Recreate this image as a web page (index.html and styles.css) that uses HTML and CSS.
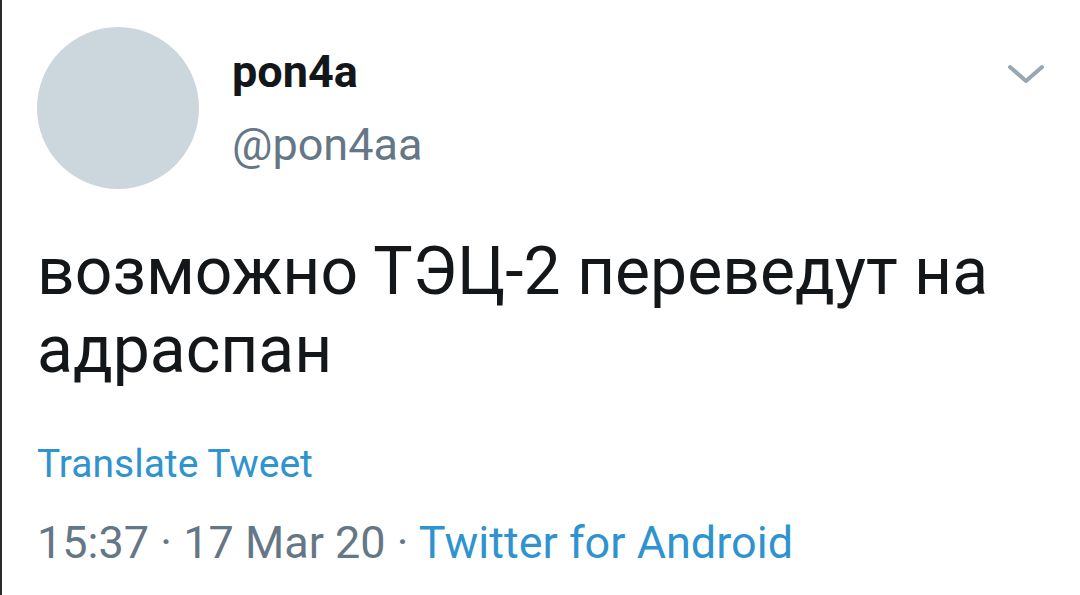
FILE: index.html
```html
<!DOCTYPE html>
<html lang="ru">
<head>
<meta charset="utf-8">
<link rel="stylesheet" href="styles.css">
</head>
<body>
<div class="tweet">
  <div class="head">
    <div class="avatar"></div>
    <div class="who">
      <div class="name">pon4a</div>
      <div class="handle">@pon4aa</div>
    </div>
    <svg class="chev" width="40" height="22" viewBox="0 0 40 22"><path d="M4 4 L20 18 L36 4" fill="none" stroke="#9aa7b3" stroke-width="4" stroke-linecap="round" stroke-linejoin="round"/></svg>
  </div>
  <div class="text">возможно ТЭЦ-2 переведут на адраспан</div>
  <div class="translate">Translate Tweet</div>
  <div class="meta">15:37 · 17 Mar 20 · <span class="src">Twitter for Android</span></div>
</div>
</body>
</html>
```
FILE: styles.css
```css
html, body { margin: 0; padding: 0; background: #fff; }
body { width: 1080px; height: 595px; overflow: hidden; font-family: Roboto, "Noto Sans", sans-serif; }
.tweet {
  height: 595px;
  box-sizing: border-box;
  border-left: 2px solid #2a2a2a;
  padding: 27px 0 0 35px;
}
.head { display: flex; align-items: flex-start; }
.avatar { width: 162px; height: 162px; border-radius: 50%; background: #ccd6dd; flex: none; }
.who { margin-left: 33px; flex: 1; padding-top: 19px; }
.name { font-weight: 700; font-size: 45px; line-height: 52px; color: #14171a; }
.handle { font-size: 45px; line-height: 52px; color: #657786; margin-top: 21px; }
.chev { margin: 36px 34px 0 0; }
.text { margin-top: 44px; font-size: 66px; line-height: 78px; color: #14171a; width: 1010px; }
.translate { margin-top: 51px; font-size: 39px; line-height: 48px; color: #2f93d0; }
.meta { margin-top: 28px; font-size: 45px; line-height: 54px; color: #657786; }
.src { color: #2f93d0; }
```
